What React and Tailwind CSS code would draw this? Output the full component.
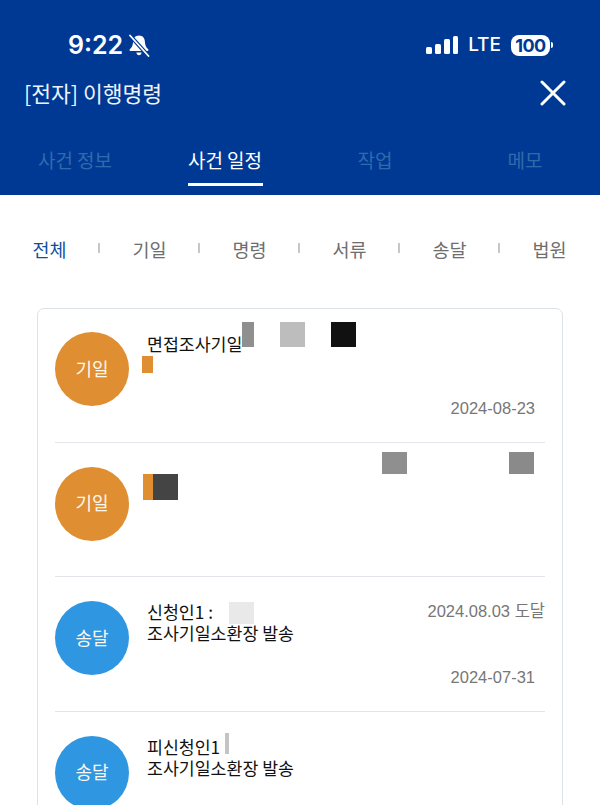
const kr = "font-['Noto_Sans_CJK_KR','Noto_Sans',sans-serif]";
const latin = "font-['Liberation_Sans','Noto_Sans_CJK_KR',sans-serif]";

function Block({ className }) {
  return <div className={`absolute ${className}`} />;
}

function StatusBar() {
  return (
    <div className="flex h-[67px] items-start justify-between pt-[27px] pr-[47px] pl-[68px]">
      <div className="flex items-center gap-[5px]">
        <span className="font-['Inter',sans-serif] text-[25px] leading-[36px] font-semibold text-white">9:22</span>
        <svg width="22" height="23" viewBox="0 0 22 23" fill="none">
          <path d="M11 1.5c-3.8 0-5.7 2.8-5.9 6.2-.2 3.4-1 5.5-3.3 7.6-.6.6-.3 1.6.7 1.6h17c1 0 1.3-1 .7-1.6-2.300-2.100-3.100-4.200-3.300-7.600-.2-3.400-2.100-6.200-5.900-6.200z" fill="#fff" />
          <path d="M8.300 18.500c.3 1.600 1.400 2.700 2.700 2.700s2.400-1.100 2.700-2.700z" fill="#fff" />
          <path d="M2 1.500 20.500 22" stroke="#003994" strokeWidth="4" />
          <path d="M2 1.500 20.500 22" stroke="#fff" strokeWidth="1.800" strokeLinecap="round" />
        </svg>
      </div>
      <div className="flex items-center gap-[10px] pt-[7px]">
        <div className="flex items-end gap-[3px]">
          <div className="h-[7px] w-[6px] rounded-[1.5px] bg-white" />
          <div className="h-[10px] w-[6px] rounded-[1.5px] bg-white" />
          <div className="h-[15px] w-[6px] rounded-[1.5px] bg-white" />
          <div className="h-[18px] w-[5px] rounded-[1.5px] bg-white" />
        </div>
        <span className="font-['Inter',sans-serif] text-[19px] leading-[22px] font-medium text-white">LTE</span>
        <div className="flex items-center gap-[1px]">
          <div className="flex h-[21px] w-[39px] items-center justify-center rounded-[8px] bg-white font-['Inter',sans-serif] text-[18px] font-bold tracking-[-0.5px] text-[#003994]">
            100
          </div>
          <div className="h-[6px] w-[2px] rounded-r-full bg-white" />
        </div>
      </div>
    </div>
  );
}

function Tab({ label, active }) {
  return (
    <div className="relative flex h-full flex-1 justify-center">
      <span className={`text-[19px] leading-[28px] ${active ? "text-white" : "text-[#2f6bac]"}`}>{label}</span>
      {active && <div className="absolute top-[37px] left-[38px] h-[3px] w-[75px] bg-white" />}
    </div>
  );
}

function Header() {
  return (
    <header className={`h-[195px] bg-[#003994] ${kr}`}>
      <StatusBar />
      <div className="flex h-[52px] items-center justify-between pr-[34px] pl-[24px]">
        <span className="text-[21.500px] leading-[52px] text-[#eef4fb]">[전자] 이행명령</span>
        <svg width="26" height="26" viewBox="0 0 26 26" fill="none" stroke="#fff" strokeWidth="3" strokeLinecap="round">
          <path d="M2 2 24 24M24 2 2 24" />
        </svg>
      </div>
      <div className="flex h-[40px] pt-[27px]">
        <Tab label="사건 정보" />
        <Tab label="사건 일정" active />
        <Tab label="작업" />
        <Tab label="메모" />
      </div>
    </header>
  );
}

function Filters() {
  const items = ["전체", "기일", "명령", "서류", "송달", "법원"];
  return (
    <div className="flex h-[113px] items-start pt-[40px]">
      {items.map((t, i) => (
        <div key={t} className="relative flex h-[28px] w-[100px] items-center justify-center pr-[1px]">
          <span className={`text-[18.500px] leading-[28px] ${i === 0 ? "text-[#0f4f9e]" : "text-[#6e6e6e]"}`}>{t}</span>
          {i < 5 && <div className="absolute top-[8px] left-[98px] h-[10px] w-[1.500px] bg-[#c4c8cd]" />}
        </div>
      ))}
    </div>
  );
}

function Row({ kind, lines, date, dateTop = "top-[89px]", side, children, rowClass, textClass = "" }) {
  const isGiil = kind === "기일";
  return (
    <div className={`relative mx-[17px] flex gap-[18px] ${rowClass}`}>
      <div className={`flex h-[74px] w-[74px] shrink-0 items-center justify-center rounded-full pb-[2px] text-[18px] text-[#fdf6ec] ${isGiil ? "bg-[#df8e32]" : "bg-[#2f96e2]"}`}>
        {kind}
      </div>
      <div className={`flex flex-col text-[17.300px] leading-[21px] text-[#111] ${textClass}`}>
        {lines.map((l) => (
          <span key={l}>{l}</span>
        ))}
      </div>
      {side && (
        <span className={`absolute top-[23px] right-0 ${latin} text-[16.500px] leading-[22px] text-[#777]`}>{side}</span>
      )}
      {date && (
        <span className={`absolute ${dateTop} right-[10px] ${latin} text-[16.500px] leading-[22px] text-[#777]`}>{date}</span>
      )}
      {children}
    </div>
  );
}

export default function App() {
  return (
    <div className={`h-[805px] w-[600px] overflow-hidden bg-white ${kr}`}>
      <Header />
      <Filters />
      <div className="mx-[37px] h-[600px] rounded-t-[7px] border border-[#dde1e8]">
        <Row kind="기일" lines={["면접조사기일"]} date="2024-08-23" dateTop="top-[88px]" rowClass="h-[133.500px] border-b border-[#e2e5ea] pt-[23px]" textClass="mt-[1px]">
          <Block className="top-[13px] left-[187px] h-[25px] w-[12px] bg-[#8f8f8f]" />
          <Block className="top-[13px] left-[225px] h-[25px] w-[25px] bg-[#bdbdbd]" />
          <Block className="top-[13px] left-[276px] h-[25px] w-[25px] bg-[#111111]" />
          <Block className="top-[47px] left-[87px] h-[17px] w-[11px] bg-[#df8e32]" />
        </Row>
        <Row kind="기일" lines={[]} rowClass="h-[134.500px] border-b border-[#e2e5ea] pt-[24px]">
          <Block className="top-[9px] left-[327px] h-[22px] w-[25px] bg-[#8f8f8f]" />
          <Block className="top-[9px] left-[454px] h-[22px] w-[25px] bg-[#8a8a8a]" />
          <Block className="top-[31px] left-[88px] h-[26px] w-[10px] bg-[#df8e32]" />
          <Block className="top-[31px] left-[98px] h-[26px] w-[25px] bg-[#444444]" />
        </Row>
        <Row kind="송달" lines={["신청인1 :", "조사기일소환장 발송"]} side="2024.08.03 도달" date="2024-07-31" rowClass="h-[134.500px] border-b border-[#e2e5ea] pt-[24px]">
          <Block className="top-[25px] left-[174px] h-[22px] w-[25px] bg-[#e9e9e9]" />
        </Row>
        <Row kind="송달" lines={["피신청인1", "조사기일소환장 발송"]} rowClass="h-[100px] pt-[24px]">
          <Block className="top-[21px] left-[170px] h-[21px] w-[4px] bg-[#c4c4c4]" />
        </Row>
      </div>
    </div>
  );
}
